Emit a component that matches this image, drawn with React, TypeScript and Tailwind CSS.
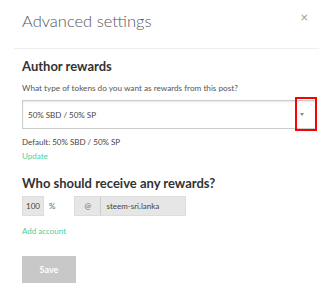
import { useState } from 'react';

export default function App() {
  const [payout, setPayout] = useState('50% SBD / 50% SP');

  return (
    <div className="w-[333px] h-[292px] bg-white text-[#333] font-['Lato',sans-serif] relative overflow-hidden">
      {/* Header */}
      <div className="mx-[14px] flex items-start justify-between border-b border-[#eee] h-[49px]">
        <h2 className="pl-[8px] pt-[10px] text-[16.5px] font-light text-[#555] leading-[22px]">Advanced settings</h2>
        <button className="mr-[11px] mt-[10px] text-[13px] leading-[14px] text-[#9a9a9a]">×</button>
      </div>

      <div className="px-[22px]">
        {/* Author rewards */}
        <h3 className="mt-[9px] text-[13px] font-bold text-[#333] leading-[16px]">Author rewards</h3>
        <p className="mt-[9px] text-[8.2px] text-[#555] leading-[10px]">What type of tokens do you want as rewards from this post?</p>
        <div className="relative mt-[7px]">
          <select
            value={payout}
            onChange={(e) => setPayout(e.target.value)}
            className="block w-[294px] h-[29px] appearance-none border border-[#ccc] bg-white pl-[5px] text-[8px] text-[#444] shadow-[inset_0_1px_2px_rgba(0,0,0,0.1)] outline-none"
          >
            <option>50% SBD / 50% SP</option>
            <option>100% Steem Power</option>
            <option>Decline Payout</option>
          </select>
          <span className="pointer-events-none absolute right-[7px] top-[13px] border-x-[2.5px] border-t-[3px] border-x-transparent border-t-[#888]" />
          <span className="pointer-events-none absolute left-[273px] top-[-3px] w-[22px] h-[34px] border-2 border-[#ff0000]" />
        </div>
        <p className="mt-[8px] text-[8px] text-[#444] leading-[10px]">Default: 50% SBD / 50% SP</p>
        <a className="block mt-[4px] text-[8px] text-[#4bcf99] leading-[10px]">Update</a>

        {/* Beneficiaries */}
        <h3 className="mt-[14px] text-[13px] font-bold text-[#333] leading-[16px]">Who should receive any rewards?</h3>
        <div className="mt-[5px] flex items-center">
          <div className="w-[22px] h-[20px] bg-[#e6e6e6] border border-[#ddd] text-[8px] text-[#444] flex items-center justify-center">100</div>
          <span className="ml-[5px] text-[8px] text-[#666]">%</span>
          <div className="ml-[19px] flex h-[20px] w-[112px] border border-[#ddd] bg-[#e6e6e6] text-[8px] text-[#444]">
            <span className="w-[26px] flex items-center justify-center border-r border-[#ccc] text-[#666]">@</span>
            <span className="flex items-center pl-[5px]">steem-sri.lanka</span>
          </div>
        </div>
        <a className="block mt-[10px] text-[8px] text-[#4bcf99] leading-[10px]">Add account</a>

        <button className="mt-[20px] w-[54px] h-[27px] bg-[#c8c8c8] text-white text-[9px] font-bold">Save</button>
      </div>
    </div>
  );
}
